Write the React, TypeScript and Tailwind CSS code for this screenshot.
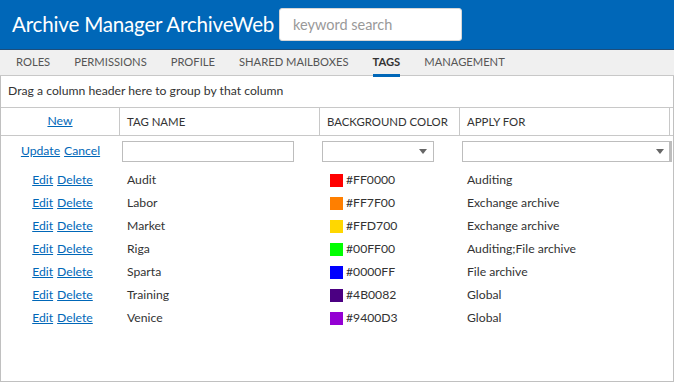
const tabs = ["ROLES", "PERMISSIONS", "PROFILE", "SHARED MAILBOXES", "TAGS", "MANAGEMENT"];

const tags = [
	{ name: "Audit", color: "#FF0000", applyFor: "Auditing" },
	{ name: "Labor", color: "#FF7F00", applyFor: "Exchange archive" },
	{ name: "Market", color: "#FFD700", applyFor: "Exchange archive" },
	{ name: "Riga", color: "#00FF00", applyFor: "Auditing;File archive" },
	{ name: "Sparta", color: "#0000FF", applyFor: "File archive" },
	{ name: "Training", color: "#4B0082", applyFor: "Global" },
	{ name: "Venice", color: "#9400D3", applyFor: "Global" },
];

function Caret() {
	return (
		<svg width="8" height="5" viewBox="0 0 8 5" className="shrink-0">
			<path d="M0 0 L8 0 L4 5 Z" fill="#666" />
		</svg>
	);
}

export default function App() {
	return (
		<div className="w-[674px] h-[382px] overflow-hidden bg-white text-[12.2px] text-[#333] font-['Lato',sans-serif]">
			{/* Header */}
			<div className="h-[49px] bg-[#0067b8] flex items-center pl-3">
				<span className="text-white text-[20.6px] w-[267px] tracking-[-0.2px]">Archive Manager ArchiveWeb</span>
				<div className="w-[183px] h-[33px] bg-white rounded-[3px] border border-[#d6d6d6] flex items-center px-[13px] text-[14.5px] text-[#999]">
					keyword search
				</div>
			</div>

			{/* Tabs */}
			<div className="h-[27px] bg-[#f0f0f0] border-t border-[#1d4e7c] border-b border-b-[#c8c8c8] flex pl-[16px] text-[11.2px] text-[#555]">
				{tabs.map((t) => (
					<div
						key={t}
						className={`relative flex items-center mr-[24px] ${t === "TAGS" ? "font-bold text-[#333]" : ""}`}
					>
						{t}
						{t === "TAGS" && <div className="absolute left-0 right-0 bottom-[-2px] h-[3px] bg-[#0067b8]" />}
					</div>
				))}
			</div>

			{/* Grid */}
			<div className="border-x border-b border-[#c0c0c0] h-[306px]">
				<div className="h-[32px] flex items-center pl-[7px] border-b border-[#c8c8c8]">
					Drag a column header here to group by that column
				</div>

				<div className="flex h-[28px] border-b border-[#c8c8c8] text-[11.4px]">
					<div className="w-[119px] flex items-center justify-center border-r border-[#c8c8c8] text-[12.2px]">
						<a className="text-[#0067b8] underline">New</a>
					</div>
					<div className="w-[200px] flex items-center pl-[7px] border-r border-[#c8c8c8]">TAG NAME</div>
					<div className="w-[140px] flex items-center pl-[7px] border-r border-[#c8c8c8]">BACKGROUND COLOR</div>
					<div className="w-[210px] flex items-center pl-[7px] border-r border-[#c8c8c8]">APPLY FOR</div>
				</div>

				<div className="flex h-[30px] items-center">
					<div className="w-[119px] flex justify-center gap-[4px]">
						<a className="text-[#0067b8] underline">Update</a>
						<a className="text-[#0067b8] underline">Cancel</a>
					</div>
					<div className="w-[200px] pl-[2px]">
						<div className="w-[172px] h-[21px] border border-[#bdbdbd]" />
					</div>
					<div className="w-[140px] pl-[2px]">
						<div className="w-[112px] h-[21px] border border-[#bdbdbd] flex items-center justify-end pr-[6px]">
							<Caret />
						</div>
					</div>
					<div className="w-[210px] pl-[2px]">
						<div className="w-[210px] h-[21px] border border-[#bdbdbd] border-r-[3px] flex items-center justify-end pr-[5px]">
							<Caret />
						</div>
					</div>
				</div>

				<div className="pt-[3px]">
					{tags.map((t) => (
						<div key={t.name} className="flex h-[23px] items-center">
							<div className="w-[119px] flex justify-center gap-[4px] pl-[4px]">
								<a className="text-[#0067b8] underline">Edit</a>
								<a className="text-[#0067b8] underline">Delete</a>
							</div>
							<div className="w-[200px] pl-[7px]">{t.name}</div>
							<div className="w-[140px] pl-[10px] flex items-center gap-[3px]">
								<span className="w-[13px] h-[13px] inline-block" style={{ backgroundColor: t.color }} />
								{t.color}
							</div>
							<div className="pl-[7px]">{t.applyFor}</div>
						</div>
					))}
				</div>
			</div>
		</div>
	);
}
